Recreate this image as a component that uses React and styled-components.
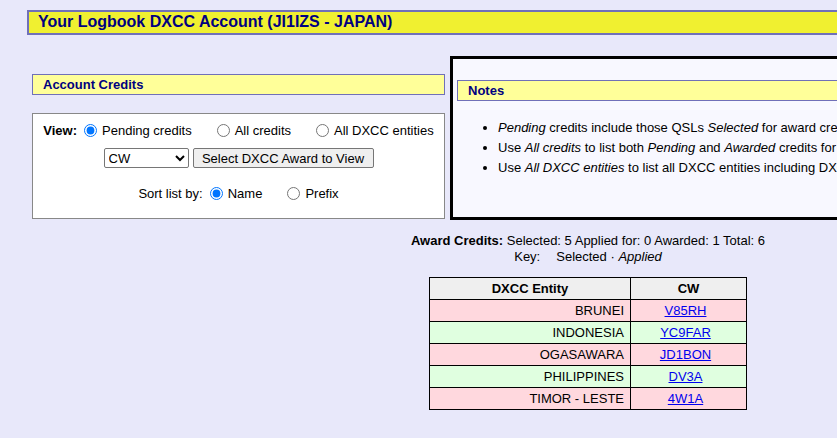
import styled, { createGlobalStyle } from 'styled-components'

const GlobalStyle = createGlobalStyle`
  html, body {
    margin: 0;
    padding: 0;
    overflow: hidden;
    background: #e8e8fa;
  }
  body {
    font-family: Arial, "Liberation Sans", sans-serif;
    font-size: 13px;
    color: #000;
  }
`

const Page = styled.div`
  width: 1149px;
  padding: 10px 0 0 27px;
  box-sizing: border-box;
`

const TitleBar = styled.div`
  height: 25px;
  box-sizing: border-box;
  background: #f0f030;
  border: 2px solid #7070b8;
  padding-left: 9px;
  font-size: 16px;
  font-weight: bold;
  color: #000080;
  line-height: 20px;
`

const Columns = styled.div`
  display: flex;
  gap: 5px;
  margin: 21px 0 0 5px;
`

const LeftCol = styled.div`
  width: 413px;
  flex-shrink: 0;
  padding-top: 18px;
`

const SectionBar = styled.div`
  height: 21px;
  box-sizing: border-box;
  background: #ffff99;
  border: 1px solid #7070b8;
  padding-left: 10px;
  font-weight: bold;
  color: #000080;
  line-height: 19px;
`

const CreditsBox = styled.form`
  margin: 18px 0 0;
  height: 106px;
  box-sizing: border-box;
  background: #fff;
  border: 1px solid #888;
  display: flex;
  flex-direction: column;
  align-items: center;
  padding-top: 6px;
`

const Line = styled.div`
  display: flex;
  align-items: center;
  height: ${(p) => p.h}px;
`

const Label = styled.span`
  font-weight: ${(p) => (p.bold ? 'bold' : 'normal')};
  margin-right: 2px;
`

const Choice = styled.label`
  display: inline-flex;
  align-items: center;
  margin-right: ${(p) => p.gap || 0}px;
`

const Radio = styled.input.attrs({ type: 'radio' })`
  width: 13px;
  height: 13px;
  margin: 0 5px 0 5px;
  accent-color: #0075ff;
`

const Select = styled.select`
  width: 85px;
  height: 20px;
  font-family: Arial, "Liberation Sans", sans-serif;
  font-size: 13px;
  margin-right: 4px;
  border: 1px solid #767676;
  border-radius: 2px;
  background: #fff;
`

const Button = styled.button`
  width: 181px;
  height: 20px;
  font-family: Arial, "Liberation Sans", sans-serif;
  font-size: 13px;
  padding: 0;
  background: #efefef;
  border: 1px solid #767676;
  border-radius: 2px;
  color: #000;
`

const NotesBox = styled.div`
  width: 700px;
  height: 164px;
  box-sizing: border-box;
  border: 3px solid #000;
  background: #f8f8ff;
  padding: 21px 0 0 4px;
`

const NotesList = styled.ul`
  margin: 17px 0 0;
  padding-left: 41px;
  line-height: 20px;
  white-space: nowrap;
`

const Summary = styled.div`
  margin-top: 13px;
  text-align: center;
  line-height: 16px;
`

const Spacer = styled.span`
  display: inline-block;
  width: ${(p) => p.w}px;
`

const CreditTable = styled.table`
  margin: 12px auto 0;
  border-collapse: collapse;
  border: 1px solid #000;
`

const HeadCell = styled.th`
  width: ${(p) => p.w}px;
  height: 21px;
  padding: 0;
  border: 1px solid #000;
  background: #efefef;
  font-weight: bold;
  text-align: center;
`

const Cell = styled.td`
  height: 21px;
  padding: 0 6px 0 0;
  border: 1px solid #000;
  background: ${(p) => (p.tone === 'green' ? '#e0ffe0' : '#ffd8de')};
  text-align: ${(p) => p.align || 'right'};
`

const CallLink = styled.a`
  color: #0000ee;
  text-decoration: underline;
`

const rows = [
  { entity: 'BRUNEI', call: 'V85RH', tone: 'pink' },
  { entity: 'INDONESIA', call: 'YC9FAR', tone: 'green' },
  { entity: 'OGASAWARA', call: 'JD1BON', tone: 'pink' },
  { entity: 'PHILIPPINES', call: 'DV3A', tone: 'green' },
  { entity: 'TIMOR - LESTE', call: '4W1A', tone: 'pink' }
]

const App = () => {
  return (
    <Page>
      <GlobalStyle />
      <TitleBar>Your Logbook DXCC Account (JI1IZS - JAPAN)</TitleBar>

      <Columns>
        <LeftCol>
          <SectionBar>Account Credits</SectionBar>
          <CreditsBox onSubmit={(e) => e.preventDefault()}>
            <Line h={20}>
              <Label bold>View:</Label>
              <Choice gap={20}>
                <Radio name='view' defaultChecked />
                Pending credits
              </Choice>
              <Choice gap={20}>
                <Radio name='view' />
                All credits
              </Choice>
              <Choice>
                <Radio name='view' />
                All DXCC entities
              </Choice>
            </Line>
            <Line h={36}>
              <Select defaultValue='CW'>
                <option>CW</option>
                <option>Mixed</option>
                <option>Phone</option>
                <option>Digital</option>
              </Select>
              <Button type='button'>Select DXCC Award to View</Button>
            </Line>
            <Line h={34}>
              <Label>Sort list by:</Label>
              <Choice gap={20}>
                <Radio name='sort' defaultChecked />
                Name
              </Choice>
              <Choice>
                <Radio name='sort' />
                Prefix
              </Choice>
            </Line>
          </CreditsBox>
        </LeftCol>

        <NotesBox>
          <SectionBar>Notes</SectionBar>
          <NotesList>
            <li>
              <i>Pending</i> credits include those QSLs <i>Selected</i> for award credit but not yet applied for.
            </li>
            <li>
              Use <i>All credits</i> to list both <i>Pending</i> and <i>Awarded</i> credits for the selected award.
            </li>
            <li>
              Use <i>All DXCC entities</i> to list all DXCC entities including DXCC entities with no credits.
            </li>
          </NotesList>
        </NotesBox>
      </Columns>

      <Summary>
        <div>
          <b>Award Credits:</b> Selected: 5 Applied for: 0 Awarded: 1 Total: 6
        </div>
        <div>
          Key:<Spacer w={16} />Selected · <i>Applied</i>
        </div>
      </Summary>

      <CreditTable>
        <thead>
          <tr>
            <HeadCell w={200}>DXCC Entity</HeadCell>
            <HeadCell w={115}>CW</HeadCell>
          </tr>
        </thead>
        <tbody>
          {rows.map((r) => (
            <tr key={r.entity}>
              <Cell tone={r.tone}>{r.entity}</Cell>
              <Cell tone={r.tone} align='center'>
                <CallLink href='#'>{r.call}</CallLink>
              </Cell>
            </tr>
          ))}
        </tbody>
      </CreditTable>
    </Page>
  )
}

export default App
